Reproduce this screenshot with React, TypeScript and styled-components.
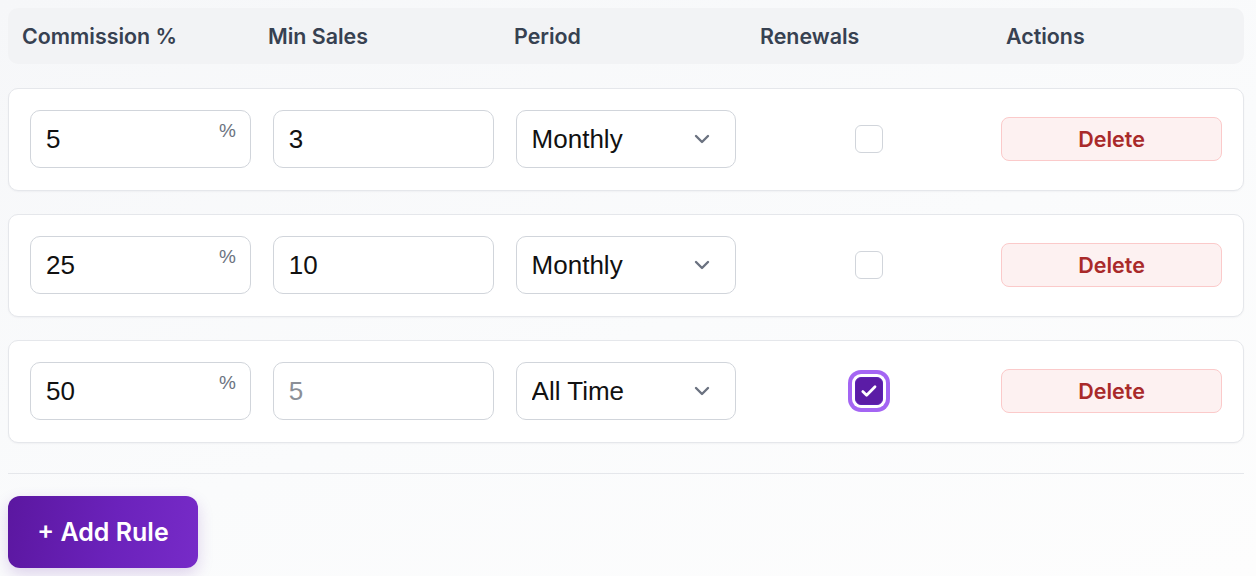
import React, { useState } from "react";
import styled, { createGlobalStyle } from "styled-components";

const GlobalStyle = createGlobalStyle`
  html, body {
    margin: 0;
    padding: 0;
  }
  body {
    min-height: 100vh;
    background: linear-gradient(160deg, #f6f7f9 0%, #fafbfc 55%, #fdfdfd 100%);
    font-family: Inter, "Noto Sans", sans-serif;
  }
`;

type Period = "Monthly" | "All Time";

interface Rule {
  id: number;
  commission: string;
  minSales: string;
  minSalesMuted?: boolean;
  period: Period;
  renewals: boolean;
}

const initialRules: Rule[] = [
  { id: 1, commission: "5", minSales: "3", period: "Monthly", renewals: false },
  { id: 2, commission: "25", minSales: "10", period: "Monthly", renewals: false },
  { id: 3, commission: "50", minSales: "5", minSalesMuted: true, period: "All Time", renewals: true },
];

const App = () => {
  const [rules, setRules] = useState<Rule[]>(initialRules);

  const toggle = (id: number) =>
    setRules((rs) => rs.map((r) => (r.id === id ? { ...r, renewals: !r.renewals } : r)));

  return (
    <Page>
      <GlobalStyle />
      <HeaderBar>
        <HeadCell>Commission %</HeadCell>
        <HeadCell>Min Sales</HeadCell>
        <HeadCell>Period</HeadCell>
        <HeadCell>Renewals</HeadCell>
        <HeadCell>Actions</HeadCell>
      </HeaderBar>

      <RuleList>
        {rules.map((rule) => (
          <RuleCard key={rule.id}>
            <Field>
              <TextInput defaultValue={rule.commission} />
              <Suffix>%</Suffix>
            </Field>
            <Field>
              <TextInput $muted={rule.minSalesMuted} defaultValue={rule.minSales} />
            </Field>
            <Field>
              <SelectBox defaultValue={rule.period}>
                <option>Monthly</option>
                <option>All Time</option>
              </SelectBox>
              <Chevron viewBox="0 0 24 24" aria-hidden>
                <path d="M6 9l6 6 6-6" />
              </Chevron>
            </Field>
            <CheckCell>
              <CheckBox
                type="button"
                $checked={rule.renewals}
                onClick={() => toggle(rule.id)}
                aria-pressed={rule.renewals}
              >
                {rule.renewals && (
                  <CheckMark viewBox="0 0 18 18" aria-hidden>
                    <path d="M2.8 9.6l3.8 3.6 8.4-8.4" />
                  </CheckMark>
                )}
              </CheckBox>
            </CheckCell>
            <DeleteButton type="button">Delete</DeleteButton>
          </RuleCard>
        ))}
      </RuleList>

      <Divider />

      <AddButton type="button">+ Add Rule</AddButton>
    </Page>
  );
};

const Page = styled.div`
  padding: 8px 12px 8px 8px;
`;

const HeaderBar = styled.div`
  display: grid;
  grid-template-columns: repeat(5, 1fr);
  column-gap: 22px;
  align-items: center;
  height: 56px;
  padding: 0 14px;
  background: #f2f3f5;
  border-radius: 10px;
`;

const HeadCell = styled.div`
  font-size: 21.4px;
  font-weight: 600;
  color: #374151;
`;

const RuleList = styled.div`
  display: flex;
  flex-direction: column;
  gap: 23px;
  margin-top: 24px;
`;

const RuleCard = styled.div`
  display: grid;
  grid-template-columns: repeat(5, 1fr);
  column-gap: 22px;
  align-items: center;
  padding: 21px 21px 22px;
  background: #ffffff;
  border: 1px solid #e5e7eb;
  border-radius: 10px;
  box-shadow: 0 1px 2px rgba(17, 24, 39, 0.04);
`;

const Field = styled.div`
  position: relative;
  height: 58px;
`;

const TextInput = styled.input<{ $muted?: boolean }>`
  box-sizing: border-box;
  width: 100%;
  height: 100%;
  padding: 0 15px;
  border: 1px solid #d1d5db;
  border-radius: 10px;
  background: #fff;
  font-family: "Liberation Sans", Arial, sans-serif;
  font-size: 26px;
  color: ${(p) => (p.$muted ? "#8b8f97" : "#111111")};
  outline: none;
`;

const Suffix = styled.span`
  position: absolute;
  top: 10px;
  right: 15px;
  font-family: "Liberation Sans", Arial, sans-serif;
  font-size: 19px;
  color: #6b7280;
  pointer-events: none;
`;

const SelectBox = styled.select`
  box-sizing: border-box;
  width: 100%;
  height: 100%;
  padding: 0 44px 0 15px;
  border: 1px solid #d1d5db;
  border-radius: 10px;
  background: #fff;
  font-family: "Liberation Sans", Arial, sans-serif;
  font-size: 26px;
  color: #111111;
  appearance: none;
  outline: none;
`;

const Chevron = styled.svg`
  position: absolute;
  right: 22px;
  top: 50%;
  width: 24px;
  height: 24px;
  margin-top: -12px;
  fill: none;
  stroke: #6b7280;
  stroke-width: 2.4;
  stroke-linecap: round;
  stroke-linejoin: round;
  pointer-events: none;
`;

const CheckCell = styled.div`
  display: flex;
  justify-content: center;
  align-items: center;
`;

const CheckBox = styled.button<{ $checked: boolean }>`
  box-sizing: border-box;
  display: flex;
  align-items: center;
  justify-content: center;
  width: 28px;
  height: 28px;
  padding: 0;
  border-radius: 6px;
  cursor: pointer;
  border: 1px solid ${(p) => (p.$checked ? "#5b21b6" : "#d1d5db")};
  background: ${(p) => (p.$checked ? "#5b1ca6" : "#ffffff")};
  box-shadow: ${(p) => (p.$checked ? "0 0 0 3px #ffffff, 0 0 0 7px #a465f3" : "none")};
`;

const CheckMark = styled.svg`
  display: block;
  flex: none;
  width: 18px;
  height: 18px;
  fill: none;
  stroke: #ffffff;
  stroke-width: 2.8;
  stroke-linecap: round;
  stroke-linejoin: round;
`;

const DeleteButton = styled.button`
  height: 44px;
  width: 100%;
  border: 1px solid #fbcaca;
  border-radius: 8px;
  background: #fdf1f1;
  color: #a92a2a;
  font-family: Inter, "Noto Sans", sans-serif;
  font-size: 21.5px;
  font-weight: 600;
  cursor: pointer;
`;

const Divider = styled.hr`
  margin: 30px 0 0;
  border: none;
  border-top: 1px solid #e5e7eb;
`;

const AddButton = styled.button`
  margin-top: 22px;
  width: 190px;
  height: 72px;
  border: none;
  border-radius: 12px;
  background: linear-gradient(100deg, #5b17a0 0%, #6b22bb 55%, #772bc8 100%);
  color: #ffffff;
  font-family: Inter, "Noto Sans", sans-serif;
  font-size: 25px;
  font-weight: 600;
  box-shadow: 0 6px 16px rgba(91, 23, 160, 0.18);
  cursor: pointer;
`;

export default App;
